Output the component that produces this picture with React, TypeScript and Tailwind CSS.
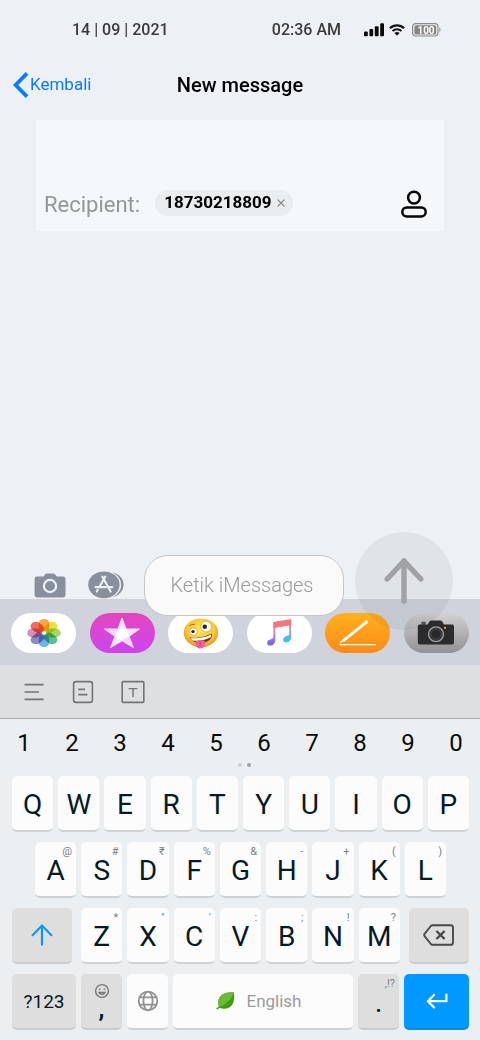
import React, { type JSX } from "react";
import clsx from "clsx";

type KeyData = { label: string; hint?: string };

const NUMBERS = ["1", "2", "3", "4", "5", "6", "7", "8", "9", "0"];

const ROW_TOP: KeyData[] = [
	{ label: "Q" },
	{ label: "W" },
	{ label: "E" },
	{ label: "R" },
	{ label: "T" },
	{ label: "Y" },
	{ label: "U" },
	{ label: "I" },
	{ label: "O" },
	{ label: "P" },
];

const ROW_MIDDLE: KeyData[] = [
	{ label: "A", hint: "@" },
	{ label: "S", hint: "#" },
	{ label: "D", hint: "₹" },
	{ label: "F", hint: "%" },
	{ label: "G", hint: "&" },
	{ label: "H", hint: "-" },
	{ label: "J", hint: "+" },
	{ label: "K", hint: "(" },
	{ label: "L", hint: ")" },
];

const ROW_BOTTOM: KeyData[] = [
	{ label: "Z", hint: "*" },
	{ label: "X", hint: "\"" },
	{ label: "C", hint: "'" },
	{ label: "V", hint: ":" },
	{ label: "B", hint: ";" },
	{ label: "N", hint: "!" },
	{ label: "M", hint: "?" },
];

const SignalIcon = () => (
	<svg width="20" height="14" viewBox="0 0 20 14" fill="#0a0a0a">
		<rect x="0" y="8.5" width="3.8" height="4.7" rx="1" />
		<rect x="5.4" y="6" width="3.8" height="7.2" rx="1" />
		<rect x="10.8" y="3.2" width="3.8" height="10" rx="1" />
		<rect x="16.2" y="0.2" width="3.8" height="13" rx="1" />
	</svg>
);

const WifiIcon = () => (
	<svg width="16" height="12" viewBox="0 0 16 12" fill="none" stroke="#161616">
		<path d="M0.9 4.3C4.8 0.4 11.2 0.4 15.1 4.3" strokeWidth="2.2" />
		<path d="M3.5 7C6 4.6 10 4.6 12.5 7" strokeWidth="2" />
		<path d="M8 11.8L5.4 9.1C6.8 7.7 9.2 7.7 10.6 9.1Z" fill="#161616" stroke="none" />
	</svg>
);

const BatteryIcon = () => (
	<svg width="30" height="14" viewBox="0 0 30 14">
		<rect x="0.6" y="0.6" width="25.4" height="12.4" rx="3" fill="#f0f1f2" stroke="#8b8b8b" strokeWidth="1.2" />
		<rect x="2.4" y="2.2" width="21.8" height="9.2" rx="1.5" fill="#858585" />
		<path d="M27.4 4.6C28.8 5 28.8 8.6 27.4 9Z" fill="#8b8b8b" />
		<text x="14" y="10.6" textAnchor="middle" fontSize="10" fontWeight="700" fill="#fff">
			100
		</text>
	</svg>
);

const PersonIcon = () => (
	<svg width="26" height="28" viewBox="0 0 26 28" fill="none" stroke="#050505" strokeWidth="2.5">
		<circle cx="13" cy="7.6" r="5.9" />
		<rect x="1.3" y="17.4" width="23.4" height="9" rx="4.5" />
	</svg>
);

const CameraIcon = () => (
	<svg width="32" height="25" viewBox="0 0 32 25">
		<path
			d="M3 3.4H9.4L11 1.4Q11.7 0.6 12.8 0.6H19.4Q20.4 0.6 21.1 1.4L22.8 3.4H29Q31.5 3.4 31.5 6V22Q31.5 24.4 29 24.4H3Q0.6 24.4 0.6 22V6Q0.6 3.4 3 3.4Z"
			fill="#87909c"
		/>
		<circle cx="16" cy="13" r="6.1" fill="none" stroke="#eef2f6" strokeWidth="2.2" />
	</svg>
);

const AppStoreIcon = () => (
	<svg width="36" height="28" viewBox="0 0 36 28">
		<ellipse cx="20" cy="13.8" rx="15.6" ry="13" fill="#87909c" />
		<ellipse cx="17.2" cy="13.8" rx="15.9" ry="14" fill="#eef2f6" />
		<ellipse cx="15.9" cy="13.8" rx="15.7" ry="13.4" fill="#87909c" />
		<g fill="none" stroke="#eef2f6" strokeWidth="2.1" strokeLinecap="round">
			<path d="M14.3 5.6L22.6 20.6" />
			<path d="M17.3 5.6L11.4 16" />
			<path d="M7.5 16.1H18" />
			<path d="M21.4 16.1H24.3" />
			<path d="M9.8 18.8L8.8 20.6" />
		</g>
	</svg>
);

const SendIcon = () => (
	<svg width="40" height="48" viewBox="0 0 40 48" fill="none" stroke="#a0a2a4" strokeWidth="5.4" strokeLinecap="round" strokeLinejoin="round">
		<path d="M20 44V4" />
		<path d="M3.2 22L20 4L36.8 22" />
	</svg>
);

const PETALS = [
	{ angle: 0, color: "#fba63c" },
	{ angle: 45, color: "#ece03c" },
	{ angle: 90, color: "#a9d566" },
	{ angle: 135, color: "#62bd98" },
	{ angle: 180, color: "#6cb2e6" },
	{ angle: 225, color: "#8f8bc8" },
	{ angle: 270, color: "#d392b6" },
	{ angle: 315, color: "#f26a5b" },
];

const PhotosIcon = () => (
	<svg width="36" height="30" viewBox="0 0 36 30">
		{PETALS.map(({ angle, color }) => (
			<g key={angle} className="mix-blend-multiply" transform="translate(18 15) scale(1.2 1)">
				<rect x="-4.4" y="-14" width="8.8" height="12.4" rx="4.4" fill={color} transform={`rotate(${angle})`} />
			</g>
		))}
	</svg>
);

const StarIcon = () => (
	<svg width="38" height="32" viewBox="0 0 38 32">
		<path
			d="M19 1L23 12H36.5L26 19.4L30.4 30.5L19 23.8L7.6 30.5L12 19.4L1.5 12H15Z"
			fill="#fbe6fb"
			stroke="#fbe6fb"
			strokeLinejoin="round"
		/>
		<path d="M15 12H23L26 19.4L19 23.8L12 19.4Z" fill="#fff" />
		<path d="M1.5 12L12 19.4L15 12ZM30.4 30.5L26 19.4L19 23.8Z" fill="#f3c9f4" opacity="0.6" />
	</svg>
);

const ZanyIcon = () => (
	<svg width="36" height="32" viewBox="0 0 36 32">
		<defs>
			<radialGradient id="zanyFace" cx="0.5" cy="0.4" r="0.6">
				<stop offset="0" stopColor="#ffe65a" />
				<stop offset="0.65" stopColor="#fdc83a" />
				<stop offset="1" stopColor="#e8901c" />
			</radialGradient>
		</defs>
		<ellipse cx="18" cy="15.8" rx="17.2" ry="14.4" fill="url(#zanyFace)" />
		<path d="M6.6 20.6C14 21.6 22.4 20 28.6 16.6C30.2 20.8 25.4 26 18.4 26C12.6 26 8.2 24.2 6.6 20.6Z" fill="#6b3413" />
		<path d="M7.4 21C14.6 21.8 22.2 20.4 28 17.4C28.3 18.7 28 19.6 27.4 20.6C22 23.3 14.6 24.6 9.3 23.4Z" fill="#fff" />
		<path d="M12.6 24.3C15.4 22.9 19.4 22.8 21.8 23.8C21.6 26 22 28.2 21 29.8C19.4 32.1 14.6 31.9 13.4 29.4C12.6 27.8 12.8 26 12.6 24.3Z" fill="#f25c96" />
		<path d="M17 24.6L17.2 28.6" stroke="#c83d75" strokeWidth="0.9" />
		<circle cx="23.2" cy="9.6" r="5.3" fill="#fff" stroke="#c99743" strokeWidth="0.6" />
		<circle cx="21.8" cy="9.8" r="2.2" fill="#3d2010" />
		<circle cx="10.4" cy="14.6" r="3.7" fill="#fff" stroke="#c99743" strokeWidth="0.6" />
		<circle cx="10" cy="14.6" r="1.7" fill="#3d2010" />
		<path d="M6.8 8.6Q9 6.8 11.6 7.3" fill="none" stroke="#a2601b" strokeWidth="1.1" strokeLinecap="round" />
	</svg>
);

const MusicIcon = () => (
	<svg width="26" height="28" viewBox="0 0 26 28">
		<defs>
			<linearGradient id="musicBody" x1="0" y1="0" x2="0" y2="1">
				<stop offset="0" stopColor="#f8716b" />
				<stop offset="0.35" stopColor="#e884b4" />
				<stop offset="0.7" stopColor="#8e7bea" />
				<stop offset="1" stopColor="#7060e8" />
			</linearGradient>
			<linearGradient id="musicRight" x1="0" y1="0" x2="0" y2="1">
				<stop offset="0" stopColor="#f8716b" />
				<stop offset="0.4" stopColor="#b99bd0" />
				<stop offset="0.75" stopColor="#56b6f0" />
				<stop offset="1" stopColor="#35c4ec" />
			</linearGradient>
		</defs>
		<path d="M9.3 3.1V20.6C9.3 24.8 6.8 26.6 4.2 26.6C0 26.6 0.2 21.2 4.2 20.4C6.4 20 7.4 19.6 7.4 17.8V3.5Z" fill="url(#musicBody)" />
		<path d="M25.2 0.9V18C25.2 21.6 22.8 23.4 20 23.4C16 23.4 16.2 18.2 20 17.2C22.4 16.8 23.2 16.4 23.2 14.8V1.3Z" fill="url(#musicRight)" />
		<path d="M7.4 3.6Q7.4 2.9 8.2 2.7L24.2 0.2Q25.2 0.1 25.2 1V6.2L7.4 9Z" fill="#f2767d" />
	</svg>
);

const PenIcon = () => (
	<svg width="38" height="28" viewBox="0 0 38 28" fill="none" stroke="#fff" strokeLinecap="round">
		<path d="M4.4 21.6L25.4 4.6" strokeWidth="2.8" />
		<path d="M26.7 3.6L27.6 2.8" strokeWidth="3.2" />
		<path d="M1.4 23.6L4.6 20.8" strokeWidth="1.2" />
		<path d="M1 25.6H36.5" strokeWidth="1.1" />
	</svg>
);

const RetroCameraIcon = () => (
	<svg width="38" height="26" viewBox="0 0 38 26">
		<rect x="4.4" y="1.8" width="4.4" height="3" rx="0.8" fill="#555" />
		<path
			d="M2.6 4.4H10.6L12.6 1.2Q13.2 0.4 14.2 0.4H23.4Q24.4 0.4 25 1.2L27 4.4H35.2Q37 4.4 37 6.4V22.6Q37 24.6 35.2 24.6H2.6Q0.8 24.6 0.8 22.6V6.4Q0.8 4.4 2.6 4.4Z"
			fill="#2b2b2d"
		/>
		<circle cx="19" cy="14.2" r="7.4" fill="#343436" stroke="#a4a4a6" strokeWidth="1.3" />
		<circle cx="19" cy="14.2" r="4.9" fill="#29292b" stroke="#454547" strokeWidth="0.8" />
		<circle cx="28" cy="7.8" r="1.1" fill="#f5b51d" />
	</svg>
);

const apps: { name: string; colorClass: string; icon: JSX.Element }[] = [
	{ name: "Photos", colorClass: "bg-white", icon: <PhotosIcon /> },
	{ name: "iTunes", colorClass: "bg-linear-to-b from-[#e545bd] to-[#cc43f0]", icon: <StarIcon /> },
	{ name: "Memoji", colorClass: "bg-white", icon: <ZanyIcon /> },
	{ name: "Music", colorClass: "bg-white", icon: <MusicIcon /> },
	{ name: "Pages", colorClass: "bg-linear-to-b from-[#ffb01f] to-[#ff8a18]", icon: <PenIcon /> },
	{ name: "Camera", colorClass: "bg-linear-to-b from-[#d2d2d5] to-[#929196]", icon: <RetroCameraIcon /> },
];

const ShiftIcon = () => (
	<svg width="22" height="22" viewBox="0 0 22 22" fill="none" stroke="#0f96fa" strokeWidth="2.2" strokeLinecap="round">
		<path d="M11 20.6V1.8M1.6 11.2L11 1.6L20.4 11.2" />
	</svg>
);

const BackspaceIcon = () => (
	<svg width="32" height="22" viewBox="0 0 32 22" fill="none" stroke="#4a4a4a" strokeWidth="1.9" strokeLinejoin="round">
		<path d="M9.6 1.2H27.6Q30 1.2 30 3.6V18.4Q30 20.8 27.6 20.8H9.6Q8.6 20.8 7.8 20L1.6 12.2Q0.8 11 1.6 9.8L7.8 2Q8.6 1.2 9.6 1.2Z" />
		<path d="M13.4 7L21.6 15M21.6 7L13.4 15" strokeWidth="2.4" />
	</svg>
);

const GlobeIcon = () => (
	<svg width="22" height="22" viewBox="0 0 22 22" fill="none" stroke="#929292" strokeWidth="1.8">
		<circle cx="11" cy="11" r="9.3" />
		<ellipse cx="11" cy="11" rx="4.6" ry="9.3" />
		<path d="M2.4 7.4H19.6M2.4 14.6H19.6" />
	</svg>
);

const SmileyIcon = () => (
	<svg width="16" height="16" viewBox="0 0 16 16" fill="none" stroke="#777" strokeWidth="1.4">
		<circle cx="8" cy="8" r="6.4" />
		<path d="M5 9.4C6.2 11.8 9.8 11.8 11 9.4Z" />
		<path d="M5.6 5.4V7M10.4 5.4V7" strokeWidth="1.5" />
	</svg>
);

const LeafIcon = () => (
	<svg width="20" height="20" viewBox="0 0 20 20">
		<path d="M17.8 1.4C10 0.8 2.6 3.6 2.2 11C2.1 13.2 2.6 14.8 3.4 16.2C6 18.4 12.6 18.8 16 14C18.4 10.6 18.4 5.4 17.8 1.4Z" fill="#449a10" />
		<path d="M17.8 1.4C10 0.8 2.6 3.6 2.2 11C2.1 13.2 2.6 14.8 3.4 16.2C10.4 13.2 15.4 8.2 17.8 1.4Z" fill="#68bd30" />
		<path d="M1.2 17.6L4 15.6" fill="none" stroke="#449a10" strokeWidth="1.6" strokeLinecap="round" />
	</svg>
);

const EnterIcon = () => (
	<svg width="22" height="16" viewBox="0 0 22 16" fill="none" stroke="#fff" strokeWidth="2.2" strokeLinecap="round" strokeLinejoin="round">
		<path d="M20.4 1.6V8.2H2" />
		<path d="M8 2L1.8 8.2L8 14.4" />
	</svg>
);

const KEY_BASE =
	"relative flex h-14 min-w-0 items-center justify-center rounded-[5px] border-b-2 text-[28px] text-[#061a26]";
const KEY_LIGHT = "border-[#cfd2d4] bg-[#fcfcfc]";
const KEY_GRAY = "border-[#cacccd] bg-[#dedede]";

const Key = ({ label, hint }: KeyData) => (
	<button type="button" className={clsx(KEY_BASE, KEY_LIGHT, "flex-1 pt-1")}>
		{label}
		{hint && (
			<span className="absolute top-0.5 right-1 text-[11px] leading-4 text-[#7d8083]">{hint}</span>
		)}
	</button>
);

const StatusBar = () => (
	<div className="flex h-[60px] items-center justify-between pr-[38px] pl-[72px] text-base font-medium text-[#3a3a3a]">
		<span>14 | 09 | 2021</span>
		<div className="flex items-center">
			<span>02:36 AM</span>
			<div className="ml-[23px] flex items-center gap-[5px]">
				<SignalIcon />
				<WifiIcon />
				<span className="pl-0.5">
					<BatteryIcon />
				</span>
			</div>
		</div>
	</div>
);

const Header = () => (
	<header className="grid h-[50px] grid-cols-[1fr_auto_1fr] items-center">
		<a href="#back" className="flex items-center gap-px pl-[13px] text-[17px] text-[#0a7cff]">
			<svg width="16" height="26" viewBox="0 0 16 26" fill="none" stroke="#0a7cff" strokeWidth="3.8">
				<path d="M14 1.4L2.6 13L14 24.6" />
			</svg>
			Kembali
		</a>
		<h1 className="text-xl font-medium text-black">New message</h1>
	</header>
);

const RecipientCard = () => (
	<section className="mx-9 mt-2.5 flex h-[111px] items-end bg-[#f4f8fa] pr-[17px] pb-[11px] pl-2">
		<span className="text-[22px] leading-[30px] text-[#929798]">Recipient:</span>
		<div className="mb-1 ml-[15px] flex h-[26px] items-center gap-1.5 rounded-full bg-[#eaedef] pr-2 pl-[9px]">
			<span className="text-[17px] font-bold text-black">18730218809</span>
			<button type="button" aria-label="Remove recipient" className="text-[#858585]">
				<svg width="8" height="8" viewBox="0 0 8 8" fill="none" stroke="currentColor" strokeWidth="1.3">
					<path d="M0.6 0.6L7.4 7.4M7.4 0.6L0.6 7.4" />
				</svg>
			</button>
		</div>
		<button type="button" aria-label="Contacts" className="mb-0.5 ml-auto">
			<PersonIcon />
		</button>
	</section>
);

// The input and the send button hang over the app strip below
const Composer = () => (
	<div className="relative z-10 -mb-[31px] flex h-[98px] items-center gap-[11px] pr-[27px] pl-[34px]">
		<div className="flex min-w-0 flex-1 items-center pt-2">
			<button type="button" aria-label="Camera">
				<CameraIcon />
			</button>
			<button type="button" aria-label="Apps" className="ml-[22px]">
				<AppStoreIcon />
			</button>
			<input
				type="text"
				aria-label="Message"
				placeholder="Ketik iMessages"
				className="ml-5 h-[61px] min-w-0 flex-1 rounded-3xl border border-[#c4c6c9] bg-[#fafafa] pr-5 pl-4 text-center text-xl font-light outline-none placeholder:text-[#999999]"
			/>
		</div>
		<button
			type="button"
			aria-label="Send"
			className="flex size-[98px] shrink-0 items-center justify-center rounded-full bg-black/5"
		>
			<SendIcon />
		</button>
	</div>
);

const AppStrip = () => (
	<nav className="flex h-[66px] items-center justify-between bg-[#d0d3dc] px-[11px] pt-0.5">
		{apps.map(({ name, colorClass, icon }) => (
			<button
				key={name}
				type="button"
				aria-label={name}
				className={clsx("flex h-10 w-[65px] items-center justify-center rounded-full", colorClass)}
			>
				{icon}
			</button>
		))}
	</nav>
);

const Toolbar = () => (
	<div className="flex h-[54px] items-center gap-[27px] border-b border-[#a9abad] bg-[#dedfe1] pl-6">
		<button type="button" aria-label="Menu">
			<svg width="21" height="24" viewBox="0 0 21 24" fill="none" stroke="#747474" strokeWidth="1.6">
				<path d="M0.6 4.6H19.6M0.6 12H15M0.6 19.4H19.6" />
			</svg>
		</button>
		<button type="button" aria-label="Notes">
			<svg width="22" height="24" viewBox="0 0 22 24" fill="none" stroke="#747474" strokeWidth="1.6">
				<rect x="1.6" y="1.6" width="18.8" height="20.8" rx="2.4" />
				<path d="M6.2 9.4H13M6.2 14.6H15.4" />
			</svg>
		</button>
		<button type="button" aria-label="Text">
			<svg width="24" height="24" viewBox="0 0 24 24" fill="none" stroke="#747474" strokeWidth="1.6">
				<rect x="1.2" y="1.6" width="21.6" height="20.8" rx="1" />
				<path d="M7.6 8.6H16.4M12 8.6V17" strokeWidth="1.4" />
			</svg>
		</button>
	</div>
);

const Keyboard = () => (
	<div className="bg-[#ebeff2] pb-2.5">
		<div className="grid h-[46px] grid-cols-10 items-center pt-0.5">
			{NUMBERS.map((n) => (
				<button key={n} type="button" className="text-2xl text-[#0a0a0a]">
					{n}
				</button>
			))}
		</div>
		<div className="flex h-[11px] justify-center gap-[5px] pl-2">
			<span className="-mt-0.5 size-1 rounded-full bg-[#cfd2d5]" />
			<span className="-mt-0.5 size-1 rounded-full bg-[#a0a3a6]" />
		</div>
		<div className="flex flex-col gap-2.5 pr-[11px] pl-3">
			<div className="flex gap-[5px]">
				{ROW_TOP.map((key) => (
					<Key key={key.label} {...key} />
				))}
			</div>
			<div className="flex gap-[5px] px-[23px]">
				{ROW_MIDDLE.map((key) => (
					<Key key={key.label} {...key} />
				))}
			</div>
			<div className="flex gap-[9px]">
				<button type="button" aria-label="Shift" className={clsx(KEY_BASE, KEY_GRAY, "flex-[60]")}>
					<ShiftIcon />
				</button>
				<div className="flex min-w-0 flex-[319] gap-[5px]">
					{ROW_BOTTOM.map((key) => (
						<Key key={key.label} {...key} />
					))}
				</div>
				<button type="button" aria-label="Backspace" className={clsx(KEY_BASE, KEY_GRAY, "flex-[60]")}>
					<BackspaceIcon />
				</button>
			</div>
			<div className="flex gap-[5px]">
				<button type="button" className={clsx(KEY_BASE, KEY_GRAY, "flex-[64]")}>
					<span className="pt-0.5 text-[19px]">?123</span>
				</button>
				<button type="button" className={clsx(KEY_BASE, KEY_GRAY, "flex-[41] flex-col")}>
					<SmileyIcon />
					<span className="text-2xl leading-5 font-bold">,</span>
				</button>
				<button type="button" aria-label="Language" className={clsx(KEY_BASE, KEY_LIGHT, "flex-[41]")}>
					<GlobeIcon />
				</button>
				<button type="button" className={clsx(KEY_BASE, KEY_LIGHT, "flex-[172] gap-2.5 pr-2")}>
					<LeafIcon />
					<span className="pt-0.5 text-[17px] text-[#9a9a9a]">English</span>
				</button>
				<button type="button" className={clsx(KEY_BASE, KEY_GRAY, "flex-[41] pt-1.5")}>
					<span className="absolute top-0.5 right-1 text-[11px] leading-4 text-[#7d8083]">,!?</span>
					<span className="text-2xl font-medium">.</span>
				</button>
				<button
					type="button"
					aria-label="Enter"
					className={clsx(KEY_BASE, "flex-[65] border-[#0d8ae0] bg-[#0099ff]")}
				>
					<EnterIcon />
				</button>
			</div>
		</div>
	</div>
);

const App = () => {
	return (
		<main className="flex min-h-screen flex-col bg-[#edf1f5] font-[Roboto,'Noto_Sans',sans-serif]">
			<StatusBar />
			<Header />
			<RecipientCard />
			<div className="flex-1" />
			<Composer />
			<AppStrip />
			<Toolbar />
			<Keyboard />
		</main>
	);
};

export default App;
